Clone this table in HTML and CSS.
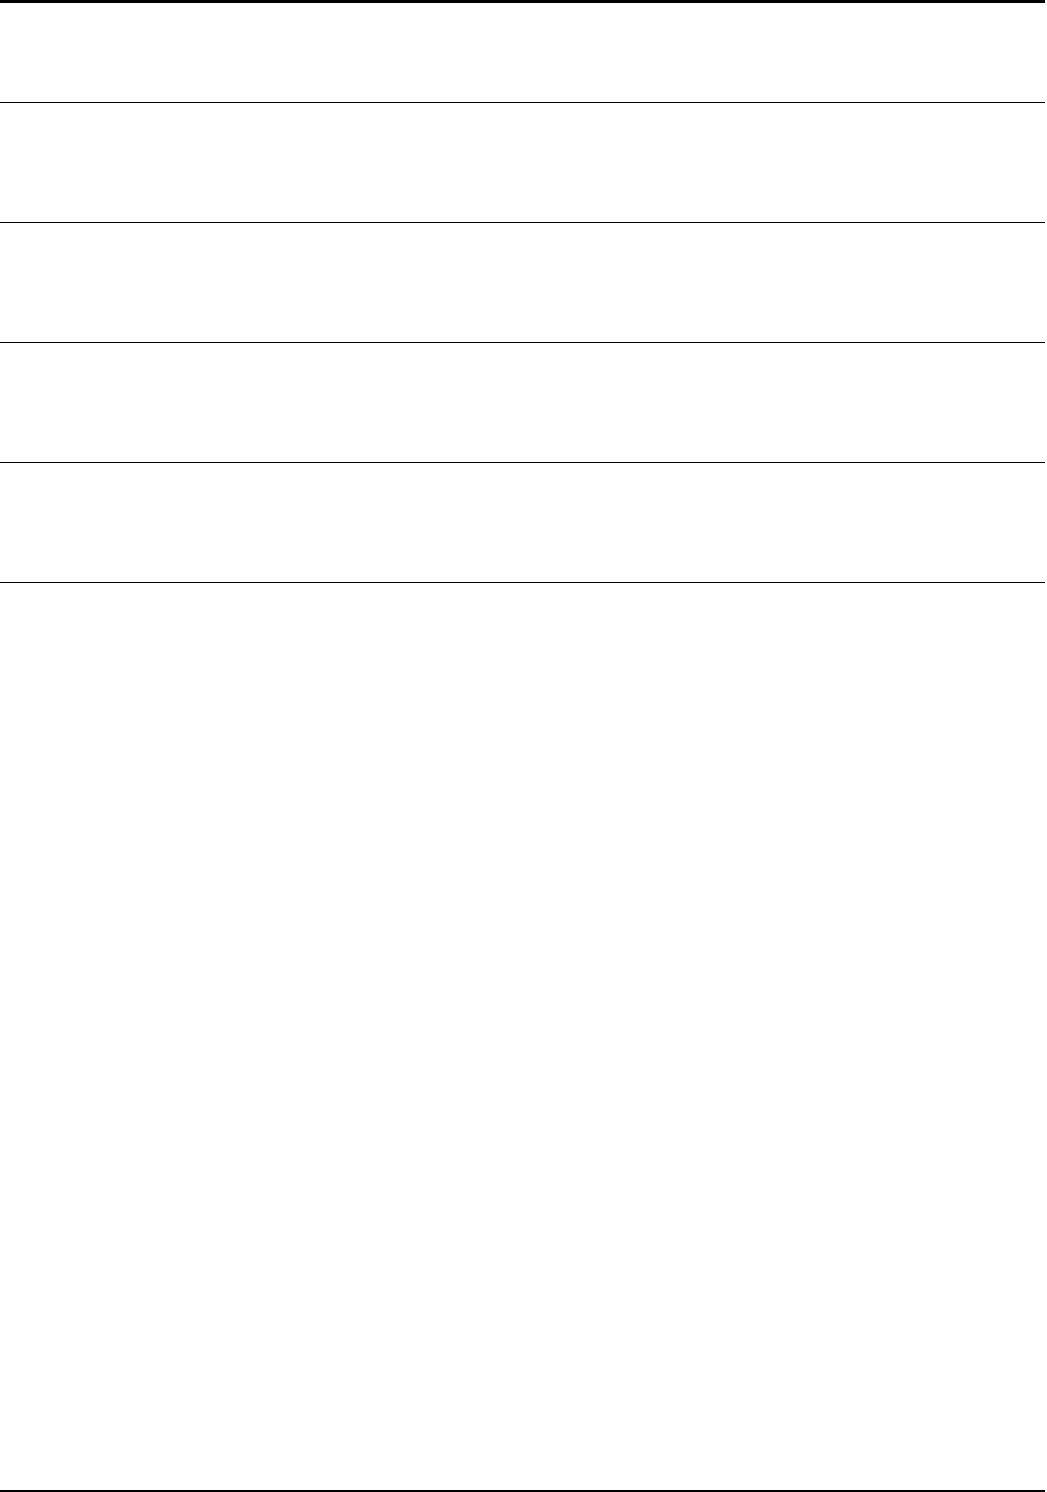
FILE: index.html
```html
<!DOCTYPE html>
<html>
<head>
    <meta charset="utf-8">
    <title>Sheet</title>
    <link rel="stylesheet" href="styles.css">
</head>
<body>
    <div class="sheet">
        <div class="row firstRow"></div>
        <div class="row"></div>
        <div class="row"></div>
        <div class="row"></div>
        <div class="row"></div>
    </div>
</body>
</html>
```
FILE: styles.css
```css
html, body {
    margin: 0;
    padding: 0;
    background-color: white;
    font-family: "Liberation Sans", Arial, sans-serif;
}

.sheet {
    width: 1045px;
    height: 1492px;
    box-sizing: border-box;
    border-top: 3px solid black;
    border-bottom: 2px solid black;
}

.row {
    height: 120px;
    box-sizing: border-box;
    border-bottom: 1px solid black;
}

.firstRow {
    height: 100px;
}
```
